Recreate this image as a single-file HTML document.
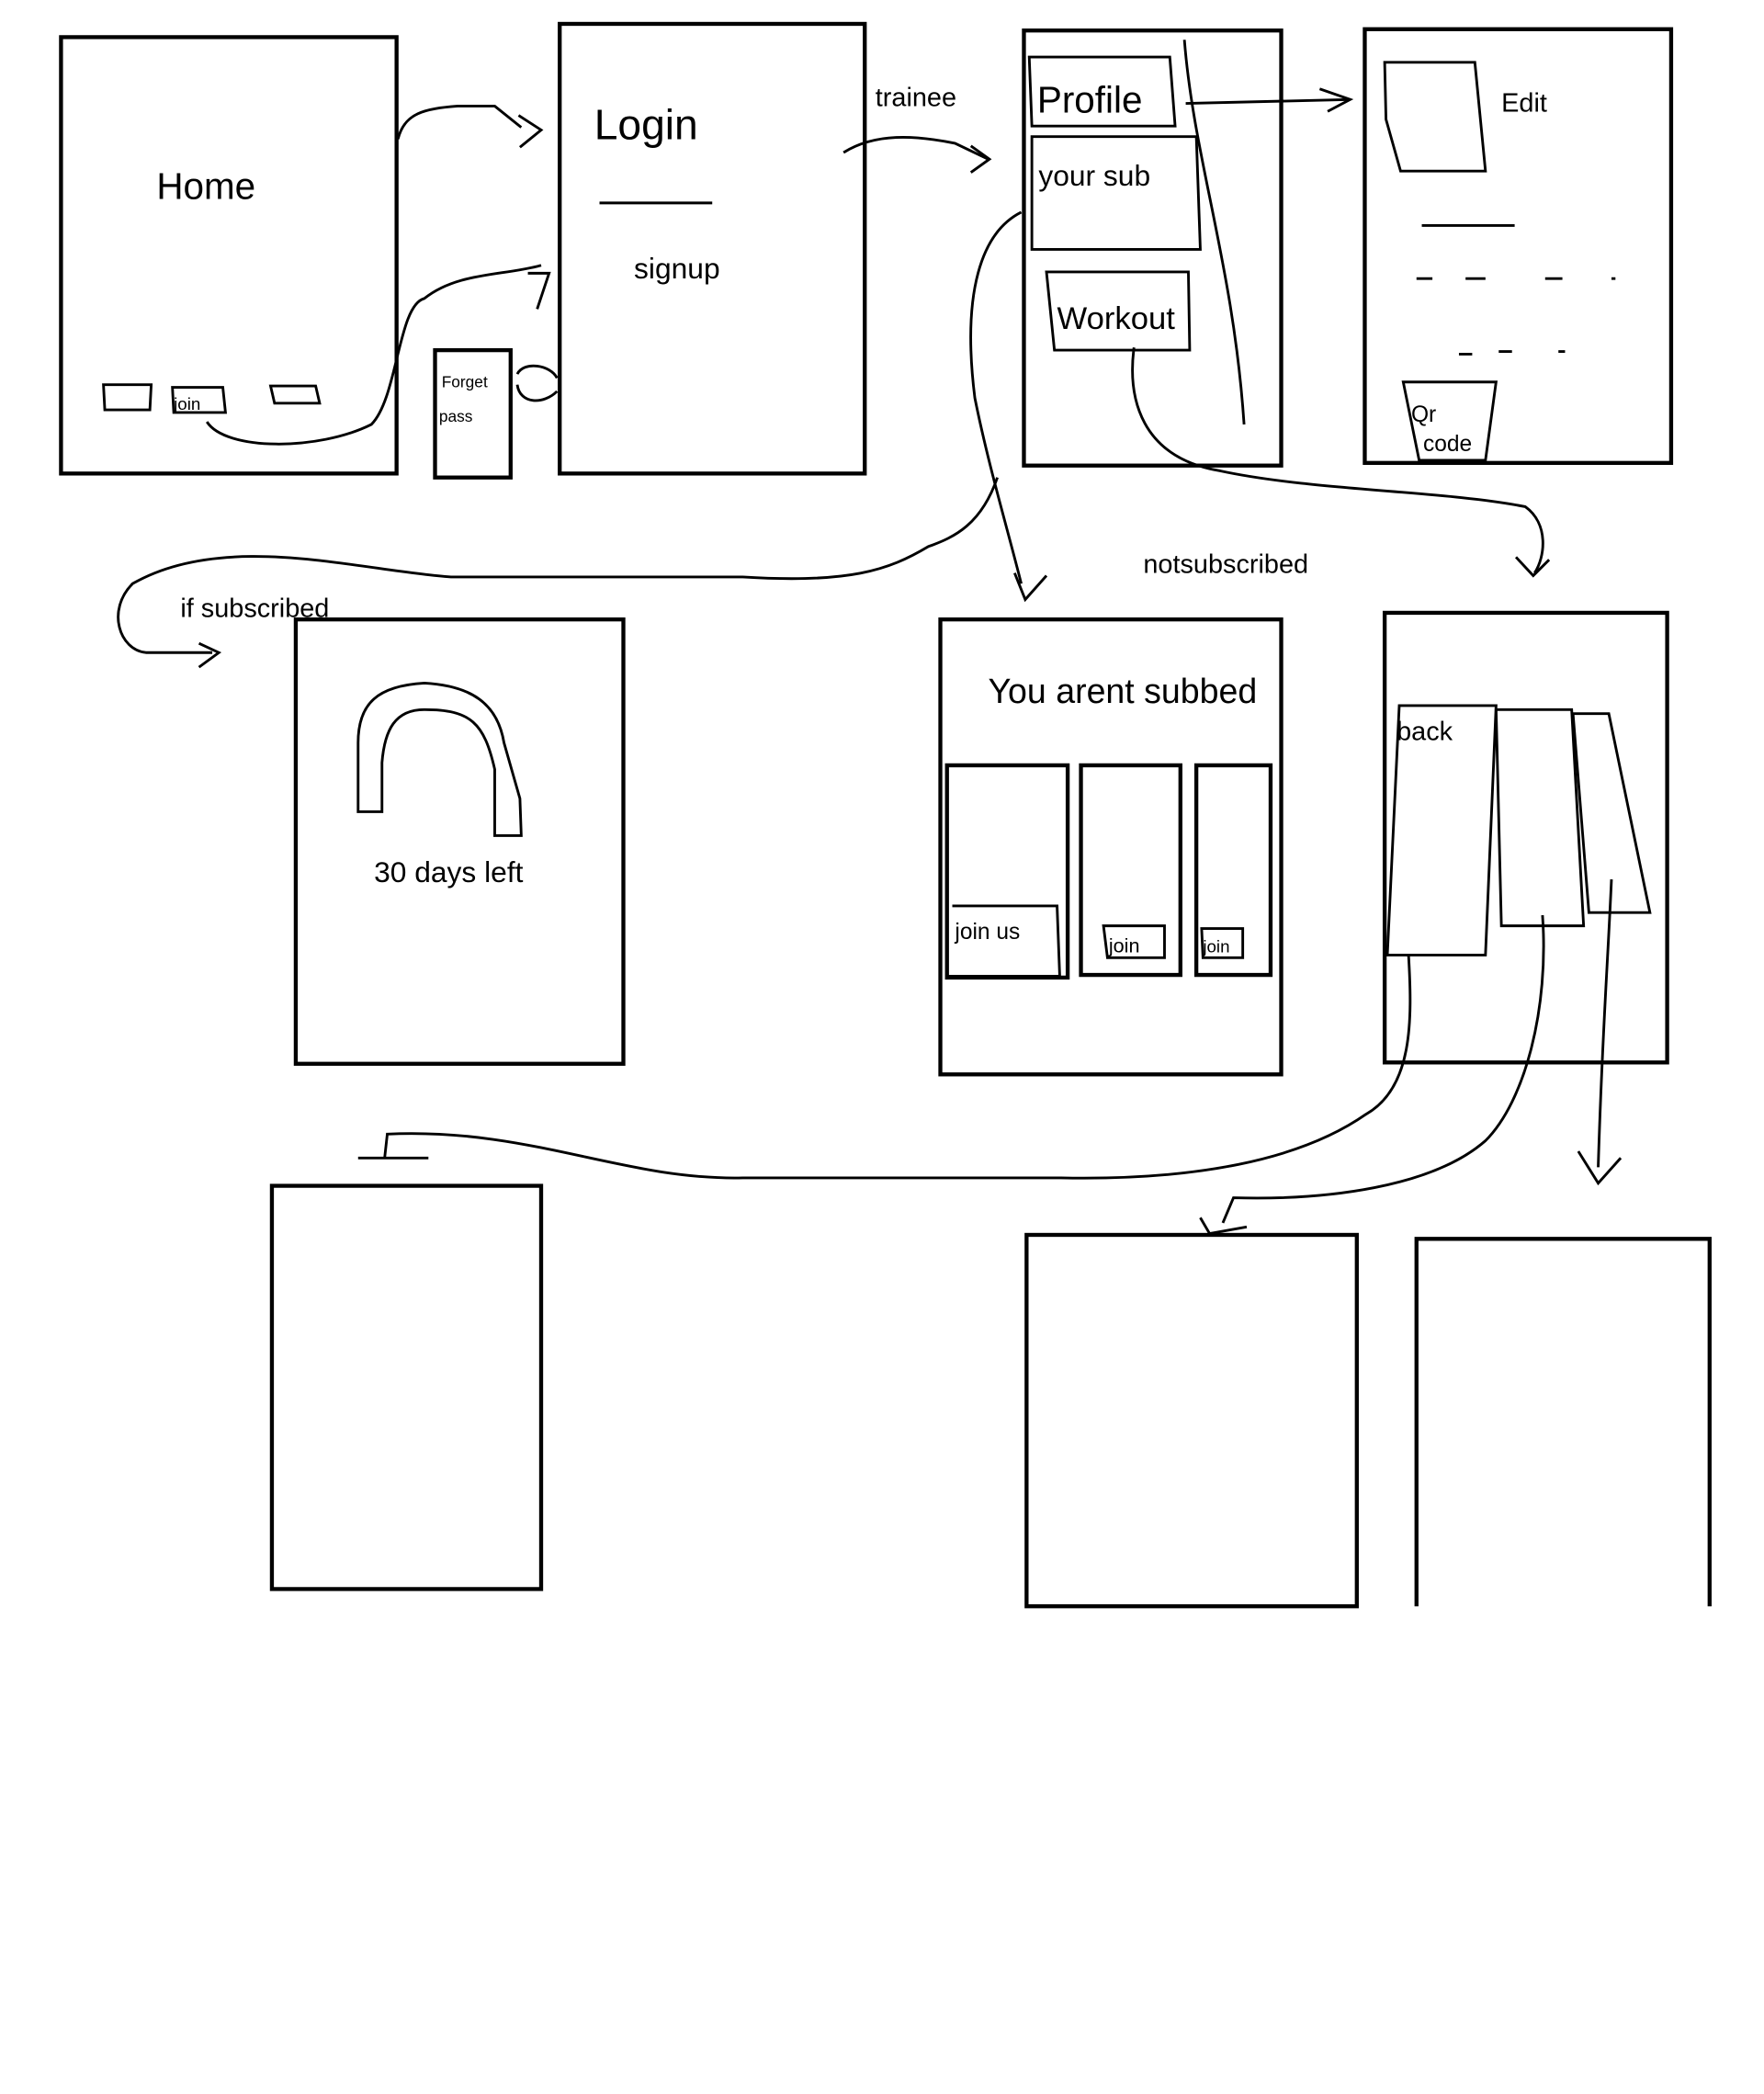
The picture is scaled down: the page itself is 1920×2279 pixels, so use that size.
<!DOCTYPE html>
<html><head><meta charset="utf-8"><style>html,body{margin:0;padding:0;background:#fff}svg{display:block}</style></head>
<body>
<svg width="1920" height="2279" viewBox="0 0 1330 1578.7" xmlns="http://www.w3.org/2000/svg">
<g fill="none" stroke="#000" stroke-width="3">
<rect x="46" y="28" width="253" height="329"/>
<rect x="328" y="264" width="57" height="96"/>
<rect x="422" y="18" width="230" height="339"/>
<rect x="772" y="23" width="194" height="328"/>
<rect x="1029" y="22" width="231" height="327"/>
<rect x="223" y="467" width="247" height="335"/>
<rect x="709" y="467" width="257" height="343"/>
<rect x="1044" y="462" width="213" height="339"/>
<rect x="205" y="894" width="203" height="304"/>
<rect x="774" y="931" width="249" height="280"/>
<path d="M1068 1211 V934 H1289 V1211"/>
</g>
<g fill="none" stroke="#000" stroke-width="2">
<path d="M78 290 H114 L113 309 H79 Z"/><path d="M130 292 H168 L170 311 H131 Z"/><path d="M204 291 H238 L241 304 H207 Z"/>
<path d="M300 105 C305 85 320 82 345 80 H373 L393 96"/><path d="M391 87 L408 98 L392 111"/>
<path d="M156 318 C170 340 240 340 280 320 C300 300 300 230 320 225 C345 205 380 208 408 200"/><path d="M398 206 L414 206 L405 233"/>
<path d="M390 282 C395 272 415 275 420 285"/><path d="M390 290 C392 305 410 305 420 295"/>
<line x1="452" y1="153" x2="537" y2="153"/>
<path d="M636 115 C660 100 690 102 720 108 L745 120"/><path d="M732 110 L746 120 L732 130"/>
<path d="M776 43 H882 L886 95 H778 Z"/>
<path d="M778 103 H902 L905 188 H778 Z"/>
<path d="M789 205 H896 L897 264 H795 Z"/>
<path d="M893 30 C900 120 930 200 938 320"/>
<path d="M894 78 L1018 75"/><path d="M995 67 L1018 75 L1001 84"/>
<path d="M1044 47 H1112 L1120 129 H1056 L1045 90 Z"/>
<path d="M1072 170 H1142 M1068 210 H1080 M1105 210 H1120 M1165 210 H1178 M1215 210 H1218 M1100 267 H1110 M1130 265 H1140 M1175 265 H1180"/>
<path d="M1058 288 H1128 L1120 347 H1070 Z"/>
<path d="M770 160 C740 175 725 220 735 300 C745 350 760 400 770 440"/><path d="M765 432 L773 452 L789 434"/>
<path d="M752 360 C740 395 720 405 700 412 C670 430 640 440 560 435 H340 C270 430 170 400 100 440 C80 460 90 490 110 492 H160"/><path d="M150 485 L165 492 L150 503"/>
<path d="M855 262 C850 300 860 345 920 355 C990 370 1090 370 1150 382 C1168 395 1165 420 1157 432"/><path d="M1143 420 L1156 434 L1168 422"/>
<path d="M270 612 V560 C270 530 285 517 320 515 C355 517 375 530 380 560 L392 602 L393 630 H373 V580 C365 545 355 535 320 535 C298 535 290 550 288 575 V612 Z"/>
<path d="M714 577 H805 V737 H714 Z" stroke-width="3"/><path d="M815 577 H890 V735 H815 Z" stroke-width="3"/><path d="M902 577 H958 V735 H902 Z" stroke-width="3"/>
<path d="M718 683 H797 L799 736 H713"/><path d="M832 698 H878 V722 H835 Z"/><path d="M906 700 H937 V722 H907 Z"/>
<path d="M1055 532 H1128 L1120 720 H1046 Z"/><path d="M1128 535 H1185 L1194 698 H1132 Z"/><path d="M1186 538 H1213 L1244 688 H1198 Z"/>
<path d="M1062 720 C1065 770 1065 820 1030 840 C980 875 900 890 800 888 H560 C470 890 400 850 292 855 L290 873 H270 M280 873 H323"/>
<path d="M1163 690 C1168 760 1150 830 1120 860 C1080 895 1000 905 930 903 L922 922"/><path d="M905 918 L912 930 L940 925"/>
<path d="M1215 663 C1212 730 1208 780 1205 880"/><path d="M1190 868 L1205 892 L1222 873"/>
</g>
<g font-family="Liberation Sans, sans-serif" fill="#000">
<text x="118" y="150" font-size="28">Home</text>
<text x="131" y="309" font-size="13">join</text>
<text x="333" y="292" font-size="12">Forget</text><text x="331" y="318" font-size="12">pass</text>
<text x="448" y="105" font-size="32">Login</text>
<text x="478" y="210" font-size="22">signup</text>
<text x="660" y="80" font-size="20">trainee</text>
<text x="782" y="85" font-size="28">Profile</text>
<text x="783" y="140" font-size="22">your sub</text>
<text x="797" y="248" font-size="24">Workout</text>
<text x="1132" y="84" font-size="20">Edit</text>
<text x="1064" y="318" font-size="17">Qr</text><text x="1073" y="340" font-size="17">code</text>
<text x="136" y="465" font-size="20">if subscribed</text>
<text x="862" y="432" font-size="20">notsubscribed</text>
<text x="282" y="665" font-size="22">30 days left</text>
<text x="745" y="530" font-size="26">You arent subbed</text>
<text x="720" y="708" font-size="17">join us</text>
<text x="836" y="718" font-size="15">join</text><text x="907" y="718" font-size="13">join</text>
<text x="1053" y="558" font-size="20">back</text>
</g>
</svg>
</body></html>
